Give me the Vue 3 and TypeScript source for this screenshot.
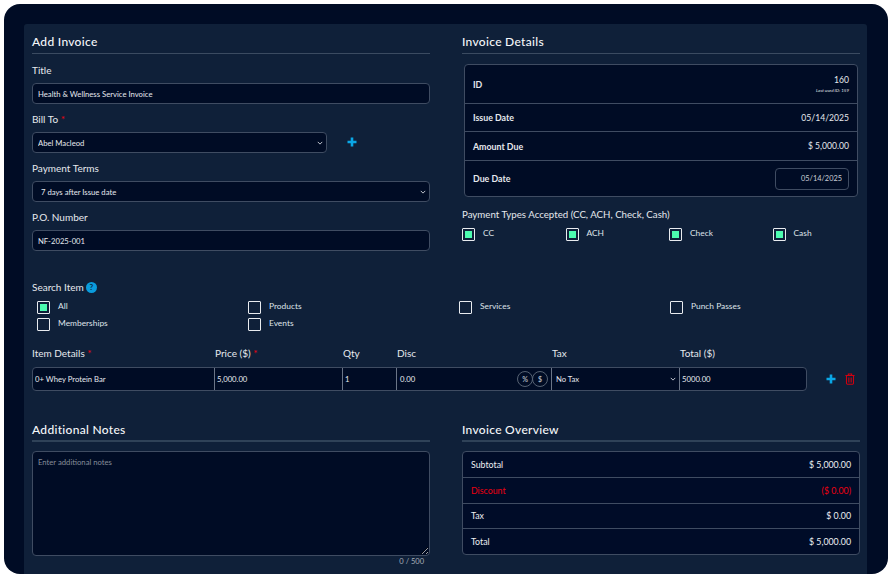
<script setup lang="ts">
import { ref } from 'vue'

const title = ref('Health & Wellness Service Invoice')
const billTo = ref('Abel Macleod')
const terms = ref('7 days after Issue date')
const poNumber = ref('NF-2025-001')
const dueDate = ref('05/14/2025')
const notes = ref('')

const paymentTypes = ['CC', 'ACH', 'Check', 'Cash']
const searchTypes = [
  { name: 'All', checked: true },
  { name: 'Products', checked: false },
  { name: 'Services', checked: false },
  { name: 'Punch Passes', checked: false },
  { name: 'Memberships', checked: false },
  { name: 'Events', checked: false },
]

// overview rows
const overview = [
  { label: 'Subtotal', value: '$ 5,000.00', red: false },
  { label: 'Discount', value: '($ 0.00)', red: true },
  { label: 'Tax', value: '$ 0.00', red: false },
  { label: 'Total', value: '$ 5,000.00', red: false },
]
</script>

<template>
  <div class="shell">
    <div class="panel">
      <div class="two-col">
        <section>
          <h2 class="heading">Add Invoice</h2>
          <div class="field first">
            <label>Title</label>
            <input v-model="title" class="control" type="text" />
          </div>
          <div class="field">
            <label>Bill To <span class="req">*</span></label>
            <div class="bill-row">
              <select v-model="billTo" class="control select bill-select">
                <option>Abel Macleod</option>
              </select>
              <svg class="plus bill-plus" viewBox="0 0 10 10"><path d="M5 .5v9M.5 5h9" /></svg>
            </div>
          </div>
          <div class="field">
            <label>Payment Terms</label>
            <select v-model="terms" class="control select terms">
              <option>7 days after Issue date</option>
            </select>
          </div>
          <div class="field">
            <label>P.O. Number</label>
            <input v-model="poNumber" class="control" type="text" />
          </div>
        </section>

        <section>
          <h2 class="heading">Invoice Details</h2>
          <div class="details">
            <div class="detail-row id-row">
              <strong>ID</strong>
              <div class="id-value">
                <span>160</span>
                <small>Last used ID: 159</small>
              </div>
            </div>
            <div class="detail-row issue-row"><strong>Issue Date</strong><span>05/14/2025</span></div>
            <div class="detail-row amount-row"><strong>Amount Due</strong><span>$ 5,000.00</span></div>
            <div class="detail-row due-row">
              <strong>Due Date</strong>
              <input v-model="dueDate" class="due-input" type="text" />
            </div>
          </div>
          <div class="types-label">Payment Types Accepted (CC, ACH, Check, Cash)</div>
          <div class="types">
            <label v-for="t in paymentTypes" :key="t" class="check">
              <input type="checkbox" checked />
              <span>{{ t }}</span>
            </label>
          </div>
        </section>
      </div>

      <div class="search-label">
        Search Item
        <span class="help">?</span>
      </div>
      <div class="search-types">
        <label v-for="s in searchTypes" :key="s.name" class="check">
          <input type="checkbox" :checked="s.checked" />
          <span>{{ s.name }}</span>
        </label>
      </div>

      <div class="item-grid item-head">
        <span>Item Details <span class="req">*</span></span>
        <span>Price ($) <span class="req">*</span></span>
        <span>Qty</span>
        <span>Disc</span>
        <span>Tax</span>
        <span>Total ($)</span>
      </div>
      <div class="item-line">
        <div class="item-grid item-row">
          <input class="cell" type="text" value="0+ Whey Protein Bar" />
          <input class="cell" type="text" value="5,000.00" />
          <input class="cell" type="text" value="1" />
          <div class="cell disc">
            <span>0.00</span>
            <div class="disc-btns">
              <button type="button">%</button>
              <button type="button">$</button>
            </div>
          </div>
          <select class="cell tax select"><option>No Tax</option></select>
          <input class="cell" type="text" value="5000.00" />
        </div>
        <svg class="plus item-plus" viewBox="0 0 10 10"><path d="M5 .5v9M.5 5h9" /></svg>
        <svg class="trash" viewBox="0 0 12 14">
          <path d="M.5 2.8h11M4 2.6V1h4v1.6M1.8 3v9.2c0 .7.4 1.1 1.1 1.1h6.2c.7 0 1.1-.4 1.1-1.1V3M4.6 5.2v6M7.4 5.2v6" />
        </svg>
      </div>

      <div class="two-col bottom">
        <section>
          <h2 class="heading">Additional Notes</h2>
          <textarea v-model="notes" class="notes" placeholder="Enter additional notes"></textarea>
          <div class="counter">0 / 500</div>
        </section>
        <section>
          <h2 class="heading">Invoice Overview</h2>
          <div class="overview">
            <div v-for="row in overview" :key="row.label" class="overview-row" :class="{ red: row.red }">
              <span>{{ row.label }}</span>
              <span class="num">{{ row.value }}</span>
            </div>
          </div>
        </section>
      </div>
    </div>
  </div>
</template>

<style>
html,
body {
  margin: 0;
  background: #fff;
  overflow: hidden;
}
</style>

<style scoped>
.shell {
  box-sizing: border-box;
  width: 884px;
  height: 570px;
  margin: 4px;
  padding: 20px 21px 0 20px;
  background: #000c25;
  border-radius: 16px;
  overflow: hidden;
  font-family: 'Lato', 'Noto Sans', sans-serif;
  color: #f1f3f6;
}

.panel {
  box-sizing: border-box;
  height: 550px;
  padding: 8px 8px 0;
  background: #0f2039;
  border-radius: 3px 3px 0 0;
}

.two-col {
  display: grid;
  grid-template-columns: 398px 398px;
  column-gap: 32px;
  height: 219px;
}

.heading {
  box-sizing: border-box;
  height: 22px;
  margin: 0;
  font-size: 12px;
  line-height: 19px;
  font-weight: 500;
  letter-spacing: 0.3px;
  color: #f5f7fa;
  border-bottom: 1px solid #3b4b61;
}

.field {
  margin-top: 7px;
}

.field.first {
  margin-top: 8px;
}

.field label,
.search-label,
.types-label,
.item-head {
  font-size: 10px;
  line-height: 16px;
  color: #e6e9ee;
}

.field label {
  display: block;
  margin-bottom: 5px;
}

.req {
  color: #f0000f;
}

.control {
  box-sizing: border-box;
  display: block;
  width: 100%;
  height: 21px;
  padding: 0 5px;
  background: #000c25;
  border: 1px solid #3f4c62;
  border-radius: 4px;
  color: #e6e9ee;
  font-family: inherit;
  font-size: 7.7px;
  outline: none;
}

.select {
  appearance: none;
  background-image: url("data:image/svg+xml,%3Csvg xmlns='http://www.w3.org/2000/svg' viewBox='0 0 8 5'%3E%3Cpath d='M1 1l3 3 3-3' fill='none' stroke='%23e6e9ee' stroke-width='1.1'/%3E%3C/svg%3E");
  background-repeat: no-repeat;
  background-position: right 3px center;
  background-size: 6px 4px;
}

.terms {
  padding-left: 8px;
}

.bill-row {
  display: flex;
  align-items: center;
}

.bill-select {
  width: 295px;
}

.plus {
  width: 10px;
  height: 10px;
  fill: none;
  stroke: #0aa7e6;
  stroke-width: 2.6;
}

.bill-plus {
  margin: -1px 0 0 20px;
}

.details {
  margin: 10px 2px 0;
  background: #000c25;
  border: 1px solid #3f4c62;
  border-radius: 4px;
}

.detail-row {
  box-sizing: border-box;
  display: flex;
  align-items: center;
  justify-content: space-between;
  padding: 0 8px;
  font-size: 8.6px;
  color: #e6e9ee;
  border-top: 1px solid #3f4c62;
}

.detail-row strong {
  font-size: 8.8px;
  font-weight: 700;
}

.id-row {
  height: 38px;
  border-top: 0;
}

.issue-row {
  height: 28px;
}

.amount-row {
  height: 29px;
}

.due-row {
  height: 36px;
}

.id-value {
  display: flex;
  flex-direction: column;
  align-items: flex-end;
  gap: 3px;
}

.id-value small {
  font-size: 4.5px;
  font-style: italic;
}

.due-input {
  box-sizing: border-box;
  width: 74px;
  height: 22px;
  padding: 0 6px;
  background: #000c25;
  border: 1px solid #3f4c62;
  border-radius: 4px;
  color: #c9ced6;
  font-family: inherit;
  font-size: 7.4px;
  text-align: right;
  outline: none;
}

.types-label {
  margin-top: 9px;
  font-size: 9.7px;
}

.types {
  display: grid;
  grid-template-columns: repeat(4, 103.5px);
  margin-top: 6px;
}

.check {
  display: flex;
  align-items: center;
  gap: 8px;
  font-size: 8.4px;
  color: #dfe3e9;
}

.check span {
  position: relative;
  top: -2px;
}

.check input {
  appearance: none;
  box-sizing: border-box;
  width: 13px;
  height: 13px;
  margin: 0;
  padding: 2px;
  background: transparent content-box;
  border: 1px solid #e8ebef;
  border-radius: 1px;
}

.check input:checked {
  background-color: #4cfcb0;
}

.search-label {
  display: flex;
  align-items: center;
  gap: 2px;
  margin-top: 28px;
}

.help {
  display: inline-flex;
  align-items: center;
  justify-content: center;
  width: 11px;
  height: 11px;
  background: #0a9bdc;
  border-radius: 50%;
  color: #062a46;
  font-size: 8px;
  font-weight: 700;
}

.search-types {
  display: grid;
  grid-template-columns: repeat(3, 211px) 1fr;
  grid-auto-rows: 17px;
  align-items: center;
  margin: 4px 0 0 5px;
}

.item-grid {
  display: grid;
  grid-template-columns: 182px 128px 54px 155px 128px 128px;
}

.item-head {
  margin-top: 12px;
}

.item-head > span {
  padding-left: 1px;
}

.item-head > span:first-child {
  padding-left: 0;
}

.item-line {
  display: flex;
  align-items: center;
  margin-top: 6px;
}

.item-row {
  box-sizing: border-box;
  width: 775px;
  height: 24px;
  grid-template-columns: 181px 128px 54px 155px 128px 1fr;
  background: #000c25;
  border: 1px solid #3f4c62;
  border-radius: 4px;
}

.cell {
  box-sizing: border-box;
  width: 100%;
  min-width: 0;
  height: 22px;
  padding: 0 2px;
  background-color: transparent;
  border: 0;
  border-left: 1px solid #6a7587;
  color: #e6e9ee;
  font-family: inherit;
  font-size: 7.7px;
  outline: none;
}

.cell:first-child {
  border-left: 0;
}

.tax {
  padding-left: 4px;
}

.disc {
  display: flex;
  align-items: center;
  justify-content: space-between;
  padding-left: 3px;
  padding-right: 3px;
}

.disc-btns {
  display: flex;
}

.disc-btns button {
  box-sizing: border-box;
  width: 16px;
  height: 16px;
  margin-left: -1px;
  padding: 0;
  background: transparent;
  border: 1px solid #566273;
  border-radius: 50%;
  color: #a7afba;
  font-family: inherit;
  font-size: 7px;
  font-weight: 700;
}

.item-plus {
  margin-left: 19px;
}

.trash {
  width: 10px;
  height: 12px;
  margin-left: 9px;
  fill: none;
  stroke: #d00010;
  stroke-width: 1.3;
}

.bottom {
  margin-top: 29px;
  height: auto;
}

.bottom .heading {
  border-bottom: 2px solid #2f4258;
}

.notes {
  box-sizing: border-box;
  display: block;
  width: 100%;
  height: 105px;
  margin-top: 9px;
  padding: 5px;
  background: #000c25;
  border: 1px solid #3f4c62;
  border-radius: 4px;
  color: #e6e9ee;
  font-family: inherit;
  font-size: 7.7px;
  color-scheme: dark;
  outline: none;
}

.notes::placeholder {
  color: #858c98;
}

.counter {
  margin-top: 1px;
  padding-right: 6px;
  font-size: 7.5px;
  line-height: 10px;
  color: #a7afba;
  text-align: right;
}

.overview {
  margin-top: 9px;
  background: #000c28;
  border: 1px solid #3f4c62;
  border-radius: 4px;
}

.overview-row {
  box-sizing: border-box;
  display: flex;
  align-items: center;
  justify-content: space-between;
  height: 25.4px;
  padding: 0 8px;
  font-size: 8.8px;
  color: #eef0f3;
  border-top: 1px solid #3f4c62;
}

.overview-row:first-child {
  border-top: 0;
}

.overview-row.red {
  color: #ee0010;
}
</style>
